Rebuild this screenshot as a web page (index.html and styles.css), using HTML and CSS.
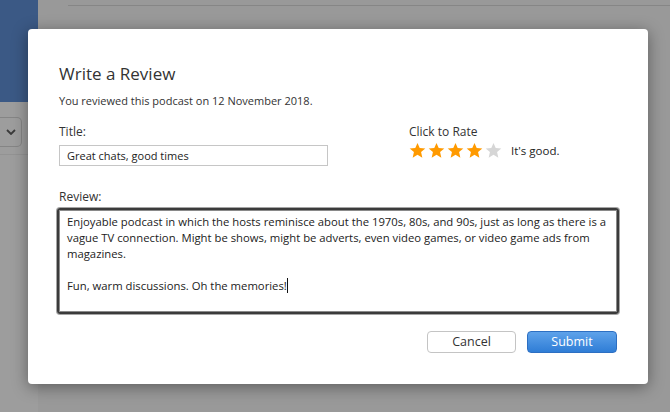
FILE: index.html
```html
<!DOCTYPE html>
<html>
<head>
<meta charset="utf-8">
<link rel="stylesheet" href="styles.css">
</head>
<body>
<div class="page">
  <aside class="sidebar">
    <div class="sidebar-head"></div>
    <div class="sidebar-body">
      <div class="dropdown">
        <svg width="10" height="6" viewBox="0 0 10 6"><path d="M1 1 L5 5 L9 1" fill="none" stroke="#3a3a3a" stroke-width="1.8"/></svg>
      </div>
      <div class="sidebar-rule"></div>
    </div>
  </aside>
  <main class="main">
    <div class="main-rule"></div>
  </main>
</div>

<div class="dialog">
  <h1 class="dialog-title">Write a Review</h1>
  <p class="dialog-sub">You reviewed this podcast on 12 November 2018.</p>
  <div class="row">
    <div class="field">
      <div class="label">Title:</div>
      <div class="input">Great chats, good times</div>
    </div>
    <div class="rate">
      <div class="label">Click to Rate</div>
      <div class="stars">
        <svg class="star on" viewBox="0 0 20 19"><path d="M10 0.6 L12.6 6.6 L19.2 7.1 L14.2 11.4 L15.7 17.9 L10 14.5 L4.3 17.9 L5.8 11.4 L0.8 7.1 L7.4 6.6 Z"/></svg>
        <svg class="star on" viewBox="0 0 20 19"><path d="M10 0.6 L12.6 6.6 L19.2 7.1 L14.2 11.4 L15.7 17.9 L10 14.5 L4.3 17.9 L5.8 11.4 L0.8 7.1 L7.4 6.6 Z"/></svg>
        <svg class="star on" viewBox="0 0 20 19"><path d="M10 0.6 L12.6 6.6 L19.2 7.1 L14.2 11.4 L15.7 17.9 L10 14.5 L4.3 17.9 L5.8 11.4 L0.8 7.1 L7.4 6.6 Z"/></svg>
        <svg class="star on" viewBox="0 0 20 19"><path d="M10 0.6 L12.6 6.6 L19.2 7.1 L14.2 11.4 L15.7 17.9 L10 14.5 L4.3 17.9 L5.8 11.4 L0.8 7.1 L7.4 6.6 Z"/></svg>
        <svg class="star off" viewBox="0 0 20 19"><path d="M10 0.6 L12.6 6.6 L19.2 7.1 L14.2 11.4 L15.7 17.9 L10 14.5 L4.3 17.9 L5.8 11.4 L0.8 7.1 L7.4 6.6 Z"/></svg>
        <span class="rate-text">It's good.</span>
      </div>
    </div>
  </div>
  <div class="label review-label">Review:</div>
  <div class="textarea">
    <p>Enjoyable podcast in which the hosts reminisce about the 1970s, 80s, and 90s, just as long as there is a vague TV connection. Might be shows, might be adverts, even video games, or video game ads from magazines.</p>
    <p>Fun, warm discussions. Oh the memories!<span class="caret"></span></p>
  </div>
  <div class="actions">
    <button class="btn btn-cancel">Cancel</button>
    <button class="btn btn-submit">Submit</button>
  </div>
</div>
</body>
</html>
```

FILE: styles.css
```css
html, body {
  margin: 0;
  padding: 0;
}
body {
  background: #999999;
  font-family: "Open Sans", "Noto Sans", sans-serif;
  color: #333;
  width: 670px;
  height: 412px;
  overflow: hidden;
  position: relative;
}
.page {
  display: flex;
  height: 412px;
}
.sidebar {
  width: 38px;
  display: flex;
  flex-direction: column;
}
.sidebar-head {
  height: 102px;
  background: #3b5985;
}
.sidebar-body {
  flex: 1;
  background: #9d9d9d;
  padding-top: 15px;
}
.dropdown {
  width: 21px;
  height: 28px;
  border: 1px solid #858585;
  border-left: none;
  border-radius: 0 5px 5px 0;
  display: flex;
  align-items: center;
  justify-content: center;
  box-sizing: content-box;
}
.sidebar-rule {
  margin-top: 7px;
  height: 1px;
  background: #939393;
}
.main {
  flex: 1;
  padding-top: 5px;
}
.main-rule {
  margin-left: 30px;
  height: 1px;
  background: #868686;
}

.dialog {
  position: absolute;
  left: 28px;
  top: 29px;
  width: 620px;
  height: 355px;
  box-sizing: border-box;
  background: #fff;
  border-radius: 4px;
  box-shadow: 0 3px 16px rgba(0,0,0,0.4);
  padding: 33px 31px 30px;
  display: flex;
  flex-direction: column;
}
.dialog-title {
  margin: 0;
  font-weight: normal;
  font-size: 17px;
  line-height: 24px;
  color: #333;
}
.dialog-sub {
  margin: 7px 0 0;
  font-size: 11px;
  line-height: 16px;
  color: #333;
}
.row {
  display: flex;
  margin-top: 15px;
}
.field {
  width: 350px;
}
.label {
  font-size: 12px;
  line-height: 16px;
  color: #333;
}
.input {
  margin-top: 5px;
  width: 269px;
  height: 21px;
  box-sizing: border-box;
  border: 1px solid #c6c6c6;
  font-size: 11px;
  line-height: 19px;
  padding-left: 7px;
  color: #222;
}
.rate {
  display: flex;
  flex-direction: column;
}
.stars {
  display: flex;
  align-items: center;
  margin-top: 2px;
}
.star {
  width: 17px;
  height: 17px;
  margin-right: 2px;
}
.star.on path { fill: #ff9a00; }
.star.off path { fill: #d6d6d6; }
.rate-text {
  margin-left: 7px;
  font-size: 11.5px;
  color: #222;
}
.review-label {
  margin-top: 23px;
}
.textarea {
  margin: 3px -2px 0;
  height: 106px;
  box-sizing: border-box;
  border: 2px solid #3b3b3b;
  border-radius: 3px;
  box-shadow: 0 0 0 1px #a5a5a5, inset 0 0 0 1px #8a8a8a;
  padding: 4px 5px 4px 8px;
  font-size: 11.3px;
  line-height: 16px;
  color: #222;
}
.textarea p {
  margin: 0 0 16px;
}
.caret {
  display: inline-block;
  width: 1px;
  height: 15px;
  background: #111;
  vertical-align: -3px;
}
.actions {
  margin-top: 17px;
  display: flex;
  justify-content: flex-end;
  gap: 11px;
}
.btn {
  height: 22px;
  box-sizing: border-box;
  border-radius: 4px;
  font-family: "Open Sans", "Noto Sans", sans-serif;
  font-size: 12.5px;
  padding: 0;
  line-height: 20px;
}
.btn-cancel {
  width: 89px;
  background: #fff;
  border: 1px solid #c4c4c4;
  color: #333;
}
.btn-submit {
  width: 90px;
  background: linear-gradient(#5ea2ea, #2f7dd6);
  border: 1px solid #2d6fc2;
  color: #fff;
}
```
